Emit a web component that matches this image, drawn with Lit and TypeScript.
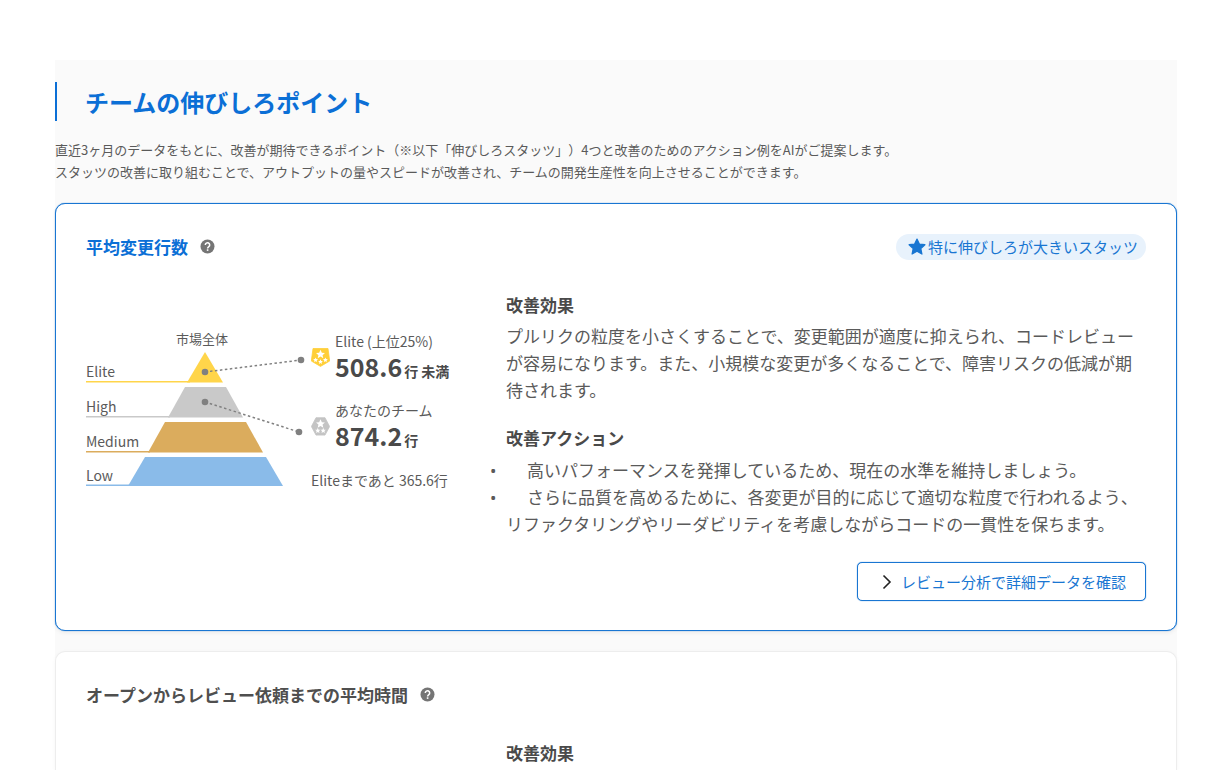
import { LitElement, html, svg, css, nothing } from "lit";
import { customElement, property } from "lit/decorators.js";

const STAR = "M0-6.2 1.8-2.2 6-1.8 2.8 1 3.8 5.2 0 3 -3.8 5.2 -2.8 1 -6-1.8 -1.8-2.2Z";

const helpIcon = html`<svg width="15" height="15" viewBox="0 0 15 15" aria-hidden="true">
  <circle cx="7.5" cy="7.5" r="7" fill="#757575" />
  <path d="M5.3 5.9a2.2 2.1 0 1 1 3.5 1.7c-.8.6-1.2.9-1.2 1.8" fill="none" stroke="#fff" stroke-width="1.5" />
  <rect x="6.8" y="10.3" width="1.6" height="1.6" fill="#fff" />
</svg>`;

const goldMedal = html`<svg class="medal" width="19" height="19" viewBox="0 0 19 19" aria-hidden="true">
  <path d="M2 .5h15L18.700 13 9.500 18.400.3 13Z" fill="#ffcf3a" stroke="#ffcf3a" stroke-width=".8" stroke-linejoin="round" />
  <path transform="translate(9.5 6.4) scale(.74)" d=${STAR} fill="#fff" />
  <path transform="translate(4.6 12) scale(.4)" d=${STAR} fill="#fff" />
  <path transform="translate(9.5 13.8) scale(.4)" d=${STAR} fill="#fff" />
  <path transform="translate(14.4 12) scale(.4)" d=${STAR} fill="#fff" />
</svg>`;

const silverMedal = html`<svg class="medal" width="19" height="19" viewBox="0 0 19 19" aria-hidden="true">
  <path d="M5 .7h9L18.600 9.500 14 18.100H5L.4 9.500Z" fill="#c4c4c4" stroke="#c4c4c4" stroke-width=".8" stroke-linejoin="round" />
  <path transform="translate(9.5 6.8) scale(.74)" d=${STAR} fill="#fff" />
  <path transform="translate(6.8 13.6) scale(.44)" d=${STAR} fill="#fff" />
  <path transform="translate(12.2 13.6) scale(.44)" d=${STAR} fill="#fff" />
</svg>`;

const TIERS = [
  { name: "Elite", color: "#ffd54a", points: "119,20 137,50.5 101,50.5", line: 50, width: 104, base: 45 },
  { name: "High", color: "#c9c9c9", points: "99,55 140,55 157,85.5 82,85.5", line: 85, width: 84, base: 80 },
  { name: "Medium", color: "#dbac5d", points: "79,90 160,90 177,120.5 62,120.5", line: 120, width: 64, base: 115 },
  { name: "Low", color: "#8abbe9", points: "59,125 180,125 197,154 42,154", line: 153.5, width: 44, base: 149 },
];

@customElement("tier-pyramid")
export class TierPyramid extends LitElement {
  static styles = css`
    :host { display: block; }
    svg { display: block; overflow: visible; }
    text { font-size: 14px; fill: #5a5a5a; }
    .caption { font-size: 13px; text-anchor: middle; }
    .leader { stroke: #808080; stroke-width: 1.5; stroke-dasharray: 2.5 2.5; }
    .dot { fill: #808080; }
  `;

  render() {
    return html`<svg width="225" height="160" viewBox="0 0 225 160">
      <text class="caption" x="116" y="12">市場全体</text>
      ${TIERS.map(
        (t) => svg`
          <rect x="0" y=${t.line - 1} width=${t.width} height="1.5" fill=${t.color} />
          <polygon points=${t.points} fill=${t.color} />
          <text x="0" y=${t.base}>${t.name}</text>`
      )}
      <path class="leader" d="M119 40 215 28" />
      <path class="leader" d="M119 70 213 100" />
      <circle class="dot" cx="119" cy="40" r="3.3" />
      <circle class="dot" cx="215" cy="28" r="3.3" />
      <circle class="dot" cx="119" cy="70" r="3.3" />
      <circle class="dot" cx="213" cy="100" r="3.3" />
    </svg>`;
  }
}

@customElement("stat-card")
export class StatCard extends LitElement {
  @property() heading = "";
  @property({ type: Boolean, reflect: true }) featured = false;

  static styles = css`
    :host {
      display: block;
      box-sizing: border-box;
      padding: 29px 30px;
      border: 1px solid #ededed;
      border-radius: 10px;
      background: #fff;
      box-shadow: 0 1px 4px rgba(0, 0, 0, 0.04);
    }
    :host([featured]) { border-color: #1976d2; box-shadow: 0 0 1px #1976d2, 0 2px 4px rgba(0, 0, 0, 0.06); }
    .header { display: flex; align-items: center; justify-content: space-between; height: 27px; }
    .title { display: flex; align-items: center; gap: 12px; }
    h2 { margin: 0; font-size: 17px; line-height: 27px; font-weight: 700; color: #4f4f4f; }
    :host([featured]) h2 { color: #0b6fd6; }
    .help { display: flex; padding: 0; border: 0; background: none; cursor: pointer; }
    .badge {
      display: flex;
      align-items: center;
      gap: 2px;
      padding: 0 8px 0 12px;
      border-radius: 14px;
      background: #e8f2fc;
      color: #1976d2;
      font-size: 15px;
      line-height: 26px;
    }
    .body { display: grid; grid-template-columns: 390px 1fr; column-gap: 30px; margin-top: 31px; }
  `;

  render() {
    return html`
      <div class="header">
        <div class="title">
          <h2>${this.heading}</h2>
          <button class="help" aria-label="${this.heading}">${helpIcon}</button>
        </div>
        ${this.featured
          ? html`<div class="badge">
              <svg width="18" height="18" viewBox="-7.5 -7.5 15 15" aria-hidden="true">
                <path d="M0-6.6 2-2.4 6.6-1.9 3.2 1.3 4.1 5.9 0 3.6 -4.1 5.9 -3.2 1.3 -6.6-1.9 -2-2.4Z"
                  fill="#1976d2" stroke="#1976d2" stroke-linejoin="round" />
              </svg>
              <span>特に伸びしろが大きいスタッツ</span>
            </div>`
          : nothing}
      </div>
      <div class="body">
        <div><slot name="chart"></slot></div>
        <div><slot></slot></div>
      </div>
    `;
  }
}

@customElement("app-root")
export class AppRoot extends LitElement {
  static styles = css`
    :host {
      display: flex;
      box-sizing: border-box;
      min-height: 100vh;
      padding: 60px 55px 0;
      background: #fff;
      color: #5a5a5a;
      font-family: "Noto Sans CJK JP", "Noto Sans", sans-serif;
      text-spacing-trim: space-all;
    }
    .page { display: flex; flex: 1; flex-direction: column; min-width: 0; background: #fafafa; }
    h1 {
      margin: 22px 0 18px;
      padding-left: 28px;
      border-left: 2px solid #0b6fd6;
      color: #0b6fd6;
      font-size: 24px;
      line-height: 39px;
      font-weight: 700;
    }
    .intro { margin: 0 0 20px; font-size: 13px; line-height: 22px; }
    .second { flex: 1; margin-top: 20px; padding-bottom: 0; border-bottom: 0; border-radius: 10px 10px 0 0; }
    .chart { display: flex; padding-top: 41px; }
    .stats { display: grid; grid-template-columns: 19px auto; column-gap: 5px; align-content: start; white-space: nowrap; }
    .stat { margin-bottom: 19px; }
    .medal { margin-top: 16px; }
    .label { font-size: 14px; line-height: 18px; }
    .value { display: flex; align-items: baseline; gap: 2px; height: 32px; color: #4a4a4a; font-weight: 700; line-height: 32px; }
    .number { font-size: 25px; }
    .unit { font-size: 14px; }
    .rest { grid-column: 1 / -1; font-size: 14px; line-height: 20px; }
    h3 { margin: 0 0 4px; color: #4a4a4a; font-size: 17px; line-height: 27px; font-weight: 700; }
    .text { margin: 0 0 21px; font-size: 17px; line-height: 27px; }
    .actions { margin: 5px 0 25px; padding: 0; list-style: none; font-size: 17px; line-height: 27px; }
    .actions li::before {
      content: "•";
      display: inline-block;
      width: 37px;
      margin-left: -16px;
      font-family: "Noto Sans", sans-serif;
      line-height: 20px;
    }
    .footer { display: flex; justify-content: flex-end; }
    .detail {
      display: flex;
      align-items: center;
      gap: 9px;
      height: 39px;
      box-sizing: border-box;
      padding: 0 19px 0 24px;
      border: 1px solid #1976d2;
      border-radius: 5px;
      box-shadow: 0 0 1px #1976d2;
      background: #fff;
      color: #1976d2;
      font: inherit;
      font-size: 15px;
      cursor: pointer;
    }
  `;

  render() {
    return html`
      <main class="page">
        <h1>チームの伸びしろポイント</h1>
        <p class="intro">
          直近3ヶ月のデータをもとに、改善が期待できるポイント（※以下「伸びしろスタッツ」）4つと改善のためのアクション例をAIがご提案します。<br />
          スタッツの改善に取り組むことで、アウトプットの量やスピードが改善され、チームの開発生産性を向上させることができます。
        </p>
        <stat-card featured heading="平均変更行数">
          <div class="chart" slot="chart">
            <tier-pyramid></tier-pyramid>
            <div class="stats">
              ${goldMedal}
              <div class="stat">
                <div class="label">Elite (上位25%)</div>
                <div class="value"><span class="number">508.6</span><span class="unit">行 未満</span></div>
              </div>
              ${silverMedal}
              <div class="stat">
                <div class="label">あなたのチーム</div>
                <div class="value"><span class="number">874.2</span><span class="unit">行</span></div>
              </div>
              <div class="rest">Eliteまであと 365.6行</div>
            </div>
          </div>
          <h3>改善効果</h3>
          <p class="text">プルリクの粒度を小さくすることで、変更範囲が適度に抑えられ、コードレビューが容易になります。また、小規模な変更が多くなることで、障害リスクの低減が期待されます。</p>
          <h3>改善アクション</h3>
          <ul class="actions">
            <li>高いパフォーマンスを発揮しているため、現在の水準を維持しましょう。</li>
            <li>さらに品質を高めるために、各変更が目的に応じて適切な粒度で行われるよう、リファクタリングやリーダビリティを考慮しながらコードの一貫性を保ちます。</li>
          </ul>
          <div class="footer">
            <button class="detail">
              <svg width="10" height="16" viewBox="0 0 10 16" aria-hidden="true">
                <path d="M1.5 1.5 8 8l-6.500 6.500" fill="none" stroke="#222" stroke-width="1.600" />
              </svg>
              レビュー分析で詳細データを確認
            </button>
          </div>
        </stat-card>
        <stat-card class="second" heading="オープンからレビュー依頼までの平均時間">
          <h3>改善効果</h3>
        </stat-card>
      </main>
    `;
  }
}
